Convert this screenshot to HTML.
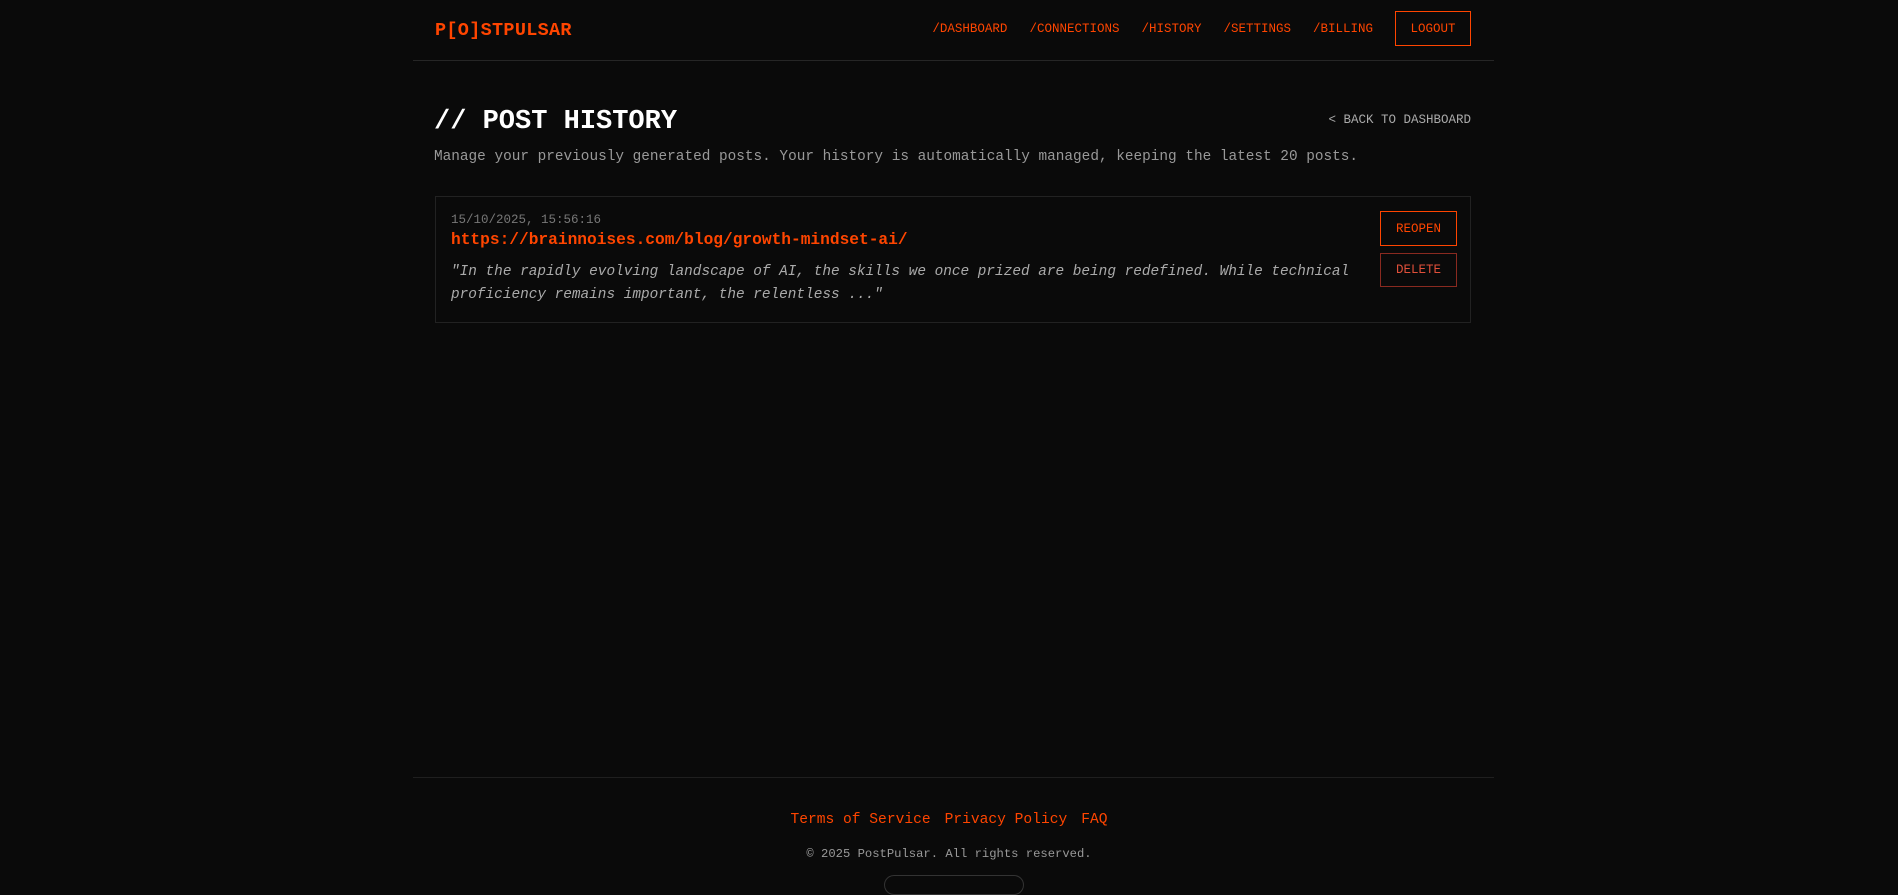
<!DOCTYPE html>
<html><head><meta charset="utf-8"><style>
*{margin:0;padding:0;box-sizing:border-box}
body{background:#0a0a0a;width:1898px;height:877px;overflow:hidden;font-family:"Liberation Mono",monospace;position:relative;color:#aaa}
.hdr{position:absolute;left:413px;width:1081px;top:0;height:61px;border-bottom:1px solid #262626}
.logo{position:absolute;left:22px;top:20px;font-size:18.5px;font-weight:bold;color:#ff4500;letter-spacing:0.3px}
.nav{position:absolute;right:23px;top:11px;display:flex;align-items:center;font-size:12.5px;color:#ff4500}
.nav span{margin-right:22px}
.lo{border:1px solid #ff4500;width:76px;height:35px;display:flex;align-items:center;justify-content:center}
h1{position:absolute;left:434px;top:107px;font-size:27px;color:#fff;font-weight:bold}
.back{position:absolute;right:427px;top:113px;font-size:12.5px;color:#aaa}
.sub{position:absolute;left:434px;top:149px;font-size:14.4px;color:#999}
.card{position:absolute;left:435px;top:196px;width:1036px;height:127px;border:1px solid #222}
.date{position:absolute;left:15px;top:16px;font-size:12.5px;color:#777}
.url{position:absolute;left:15px;top:34px;font-size:16.2px;font-weight:bold;color:#ff4500}
.q{position:absolute;left:15px;top:64px;width:920px;font-size:14.4px;line-height:23px;font-style:italic;color:#aaa}
.b{position:absolute;left:944px;width:77px;height:35px;border:1px solid #ff4500;color:#ff4500;font-size:12.5px;display:flex;align-items:center;justify-content:center}
.b2{border-color:#8a2a20;color:#e0503a;height:34px}
.fl{position:absolute;left:413px;width:1081px;top:777px;border-top:1px solid #1f1f1f}
.fn{position:absolute;left:0;width:1898px;top:812px;text-align:center;font-size:14.6px;color:#ff4500}
.fn span{margin:0 7px}
.cp{position:absolute;left:0;width:1898px;top:847px;text-align:center;font-size:12.2px;color:#999}
.pill{position:absolute;left:884px;top:875px;width:140px;height:20px;border:1px solid #333;border-radius:10px}
</style></head><body>
<div class="hdr"><div class="logo">P[O]STPULSAR</div>
<div class="nav"><span>/DASHBOARD</span><span>/CONNECTIONS</span><span>/HISTORY</span><span>/SETTINGS</span><span>/BILLING</span><div class="lo">LOGOUT</div></div></div>
<h1>// POST HISTORY</h1>
<div class="back">&lt; BACK TO DASHBOARD</div>
<div class="sub">Manage your previously generated posts. Your history is automatically managed, keeping the latest 20 posts.</div>
<div class="card">
<div class="date">15/10/2025, 15:56:16</div>
<div class="url">https://brainnoises.com/blog/growth-mindset-ai/</div>
<div class="q">"In the rapidly evolving landscape of AI, the skills we once prized are being redefined. While technical<br>proficiency remains important, the relentless ..."</div>
<div class="b" style="top:14px">REOPEN</div>
<div class="b b2" style="top:56px">DELETE</div>
</div>
<div class="fl"></div>
<div class="fn"><span>Terms of Service</span><span>Privacy Policy</span><span>FAQ</span></div>
<div class="cp">© 2025 PostPulsar. All rights reserved.</div>
<div class="pill"></div>
</body></html>
